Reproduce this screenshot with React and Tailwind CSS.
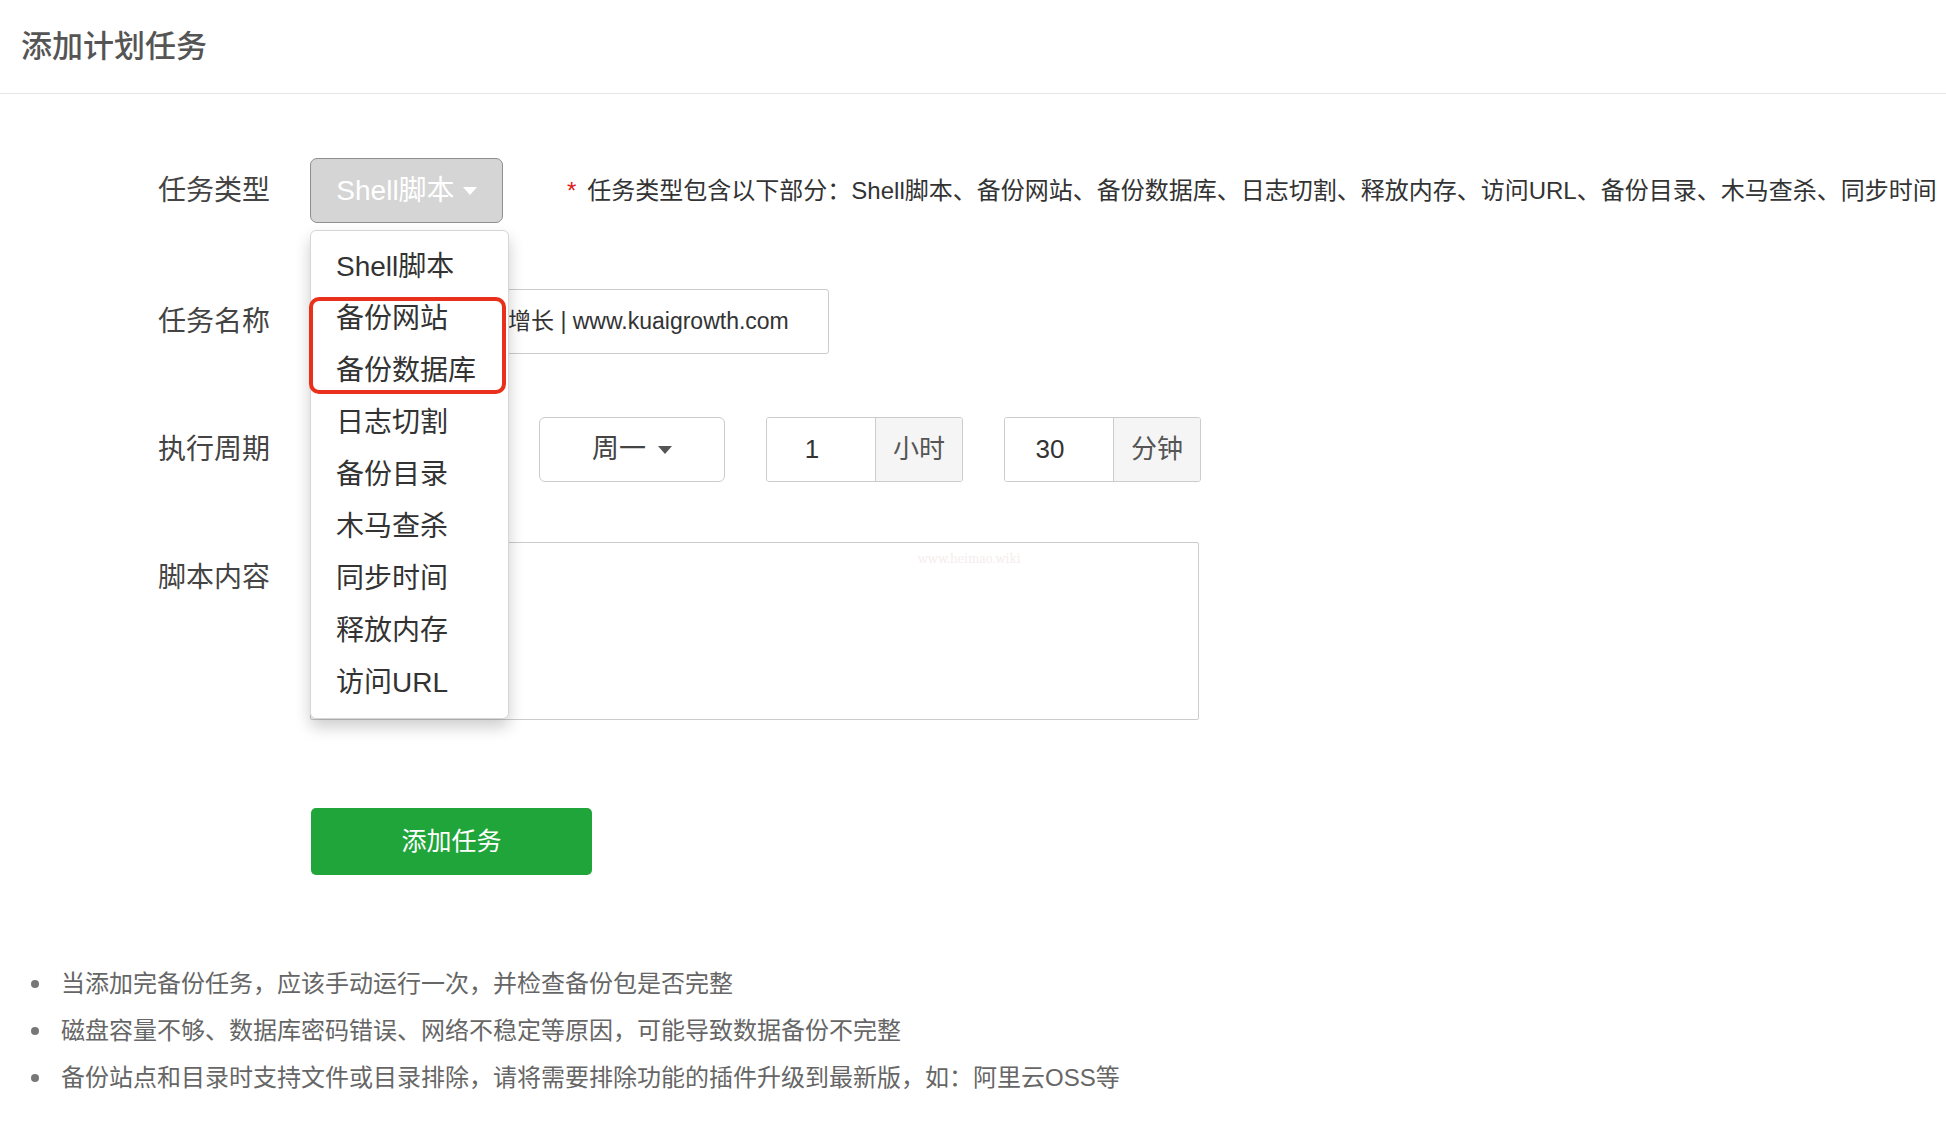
import React from "react";

const font = { fontFamily: '"Liberation Sans", "Noto Sans CJK SC", sans-serif' };

const menuItems = ["Shell脚本", "备份网站", "备份数据库", "日志切割", "备份目录", "木马查杀", "同步时间", "释放内存", "访问URL"];

const tips = [
  "当添加完备份任务，应该手动运行一次，并检查备份包是否完整",
  "磁盘容量不够、数据库密码错误、网络不稳定等原因，可能导致数据备份不完整",
  "备份站点和目录时支持文件或目录排除，请将需要排除功能的插件升级到最新版，如：阿里云OSS等",
];

const Caret = ({ className }) => (
  <span className={`inline-block h-0 w-0 border-x-[7px] border-t-[8px] border-x-transparent ${className}`} />
);

const Label = ({ children }) => (
  <div className="w-[270px] shrink-0 text-right text-[28px] leading-none text-[#444]">{children}</div>
);

const InputGroup = ({ value, unit }) => (
  <div className="flex h-[65px] overflow-hidden rounded-[3px] border border-[#ccc] text-[26px] text-[#333]">
    <div className="flex w-[108px] items-center justify-center bg-white pr-[18px]">{value}</div>
    <div className="flex w-[87px] items-center justify-center border-l border-[#ccc] bg-[#f5f5f5] text-[#555]">{unit}</div>
  </div>
);

const App = () => (
  <div className="min-h-screen w-full bg-white" style={font}>
    <div className="flex h-[94px] items-center border-b border-[#e6e6e6] pl-[21px]">
      <h1 className="text-[31px] font-medium leading-none text-[#555]">添加计划任务</h1>
    </div>

    <div className="relative">
      {/* 任务类型 */}
      <div className="mt-[64px] flex items-center">
        <Label>任务类型</Label>
        <div className="relative ml-[40px]">
          <button className="flex h-[65px] w-[193px] items-center justify-center gap-2 rounded-[7px] border border-[#8f8f8f] bg-[#d5d5d5] text-[28px] text-white">
            Shell脚本
            <Caret className="border-t-white" />
          </button>

          <div className="absolute left-0 top-[72px] z-10 w-[199px] rounded-[6px] border border-[#d6d6d6] bg-white pb-[9px] pt-[10px] shadow-[0_8px_16px_rgba(0,0,0,0.2)]">
            {menuItems.map((item) => (
              <div key={item} className="flex h-[52px] items-center pl-[25px] text-[28px] text-[#333]">
                {item}
              </div>
            ))}
            <div className="absolute left-[-2px] top-[66px] h-[97px] w-[197px] rounded-[10px] border-[4px] border-[#e8301c]" />
          </div>
        </div>
        <span className="ml-[64px] text-[24px] text-[#e01b1b]">*</span>
        <span className="ml-[11px] whitespace-nowrap text-[24px] text-[#333]">
          任务类型包含以下部分：Shell脚本、备份网站、备份数据库、日志切割、释放内存、访问URL、备份目录、木马查杀、同步时间
        </span>
      </div>

      {/* 任务名称 */}
      <div className="mt-[66px] flex items-center">
        <Label>任务名称</Label>
        <div className="ml-[40px] flex h-[65px] w-[519px] items-center overflow-hidden whitespace-nowrap rounded-[3px] border border-[#ccc] pl-[197px] text-[23px] text-[#333]">
          增长 | www.kuaigrowth.com
        </div>
      </div>

      {/* 执行周期 */}
      <div className="mt-[63px] flex items-center">
        <Label>执行周期</Label>
        <div className="ml-[40px] h-[65px] w-[197px] rounded-[6px] border border-[#ccc]" />
        <div className="ml-[32px] flex h-[65px] w-[186px] items-center justify-center gap-3 rounded-[6px] border border-[#ccc] text-[27px] text-[#444]">
          周一
          <Caret className="border-t-[#555]" />
        </div>
        <div className="ml-[41px]">
          <InputGroup value="1" unit="小时" />
        </div>
        <div className="ml-[41px]">
          <InputGroup value="30" unit="分钟" />
        </div>
      </div>

      {/* 脚本内容 */}
      <div className="mt-[60px] flex items-start">
        <div className="pt-[22px]">
          <Label>脚本内容</Label>
        </div>
        <div className="relative ml-[40px] h-[178px] w-[889px] rounded-[2px] border border-[#ccc] bg-white">
          <span className="absolute left-[607px] top-[5px] font-serif text-[14px] text-[#f6eeee]">www.heimao.wiki</span>
        </div>
      </div>

      <div className="mt-[88px] pl-[311px]">
        <button className="h-[67px] w-[281px] rounded-[5px] bg-[#20a53a] text-[25px] text-white">添加任务</button>
      </div>

      <ul className="mt-[97px] flex flex-col gap-[23px] pb-10">
        {tips.map((tip) => (
          <li key={tip} className="flex items-center text-[24px] leading-none text-[#666]">
            <span className="ml-[31px] mr-[22px] h-[8px] w-[8px] rounded-full bg-[#777]" />
            {tip}
          </li>
        ))}
      </ul>
    </div>
  </div>
);

export default App;
